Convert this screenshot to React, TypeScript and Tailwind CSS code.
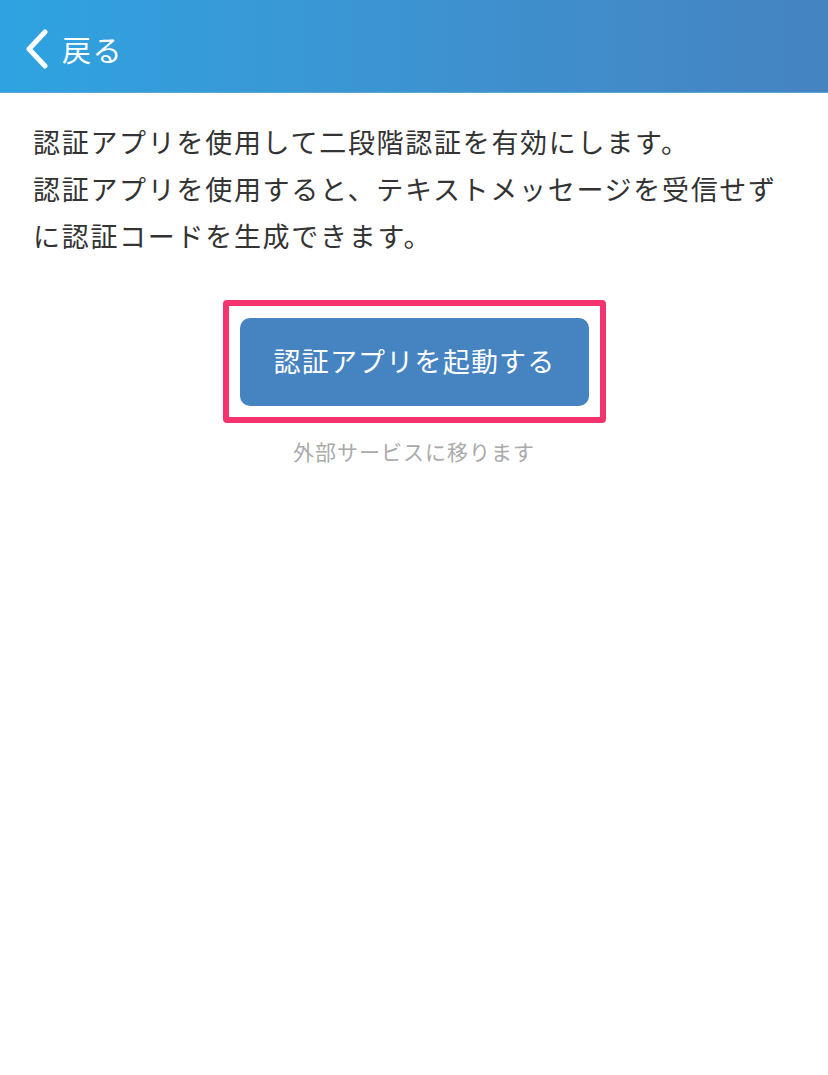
import React from "react";

export default function App() {
  const font = { fontFamily: '"Noto Sans CJK JP", "Noto Sans", sans-serif' };
  return (
    <div className="w-[828px] h-[1075px] bg-white" style={font}>
      <div className="h-[93px] bg-gradient-to-r from-[#2ea3e1] to-[#4583c1] flex items-center pl-[24px] pt-[6px] border-b border-[#5aa6d8]">
        <svg width="26" height="40" viewBox="0 0 26 40" className="mr-[12px]">
          <path d="M21 3 L5 20 L21 37" fill="none" stroke="white" strokeWidth="5" strokeLinecap="round" strokeLinejoin="round" />
        </svg>
        <span className="text-white text-[29px] leading-none tracking-[1.5px]">戻る</span>
      </div>
      <div className="pl-[33px] pt-[25px] text-[#333333] text-[27px] leading-[47px] tracking-[1.7px]">
        <div>認証アプリを使用して二段階認証を有効にします。</div>
        <div>認証アプリを使用すると、テキストメッセージを受信せず</div>
        <div>に認証コードを生成できます。</div>
      </div>
      <div className="flex flex-col items-center mt-[41px]">
        <div className="ml-[1px] w-[383px] h-[123px] border-[6px] border-[#f5336f] rounded-[4px] flex items-center justify-center">
          <div className="w-[349px] h-[88px] rounded-[10px] bg-[#4583c1] flex items-center justify-center text-white text-[27px] tracking-[1.2px]">
            認証アプリを起動する
          </div>
        </div>
        <div className="mt-[14px] text-[21px] text-[#aaaaaa] leading-[28px] tracking-[1px]">外部サービスに移ります</div>
      </div>
    </div>
  );
}
